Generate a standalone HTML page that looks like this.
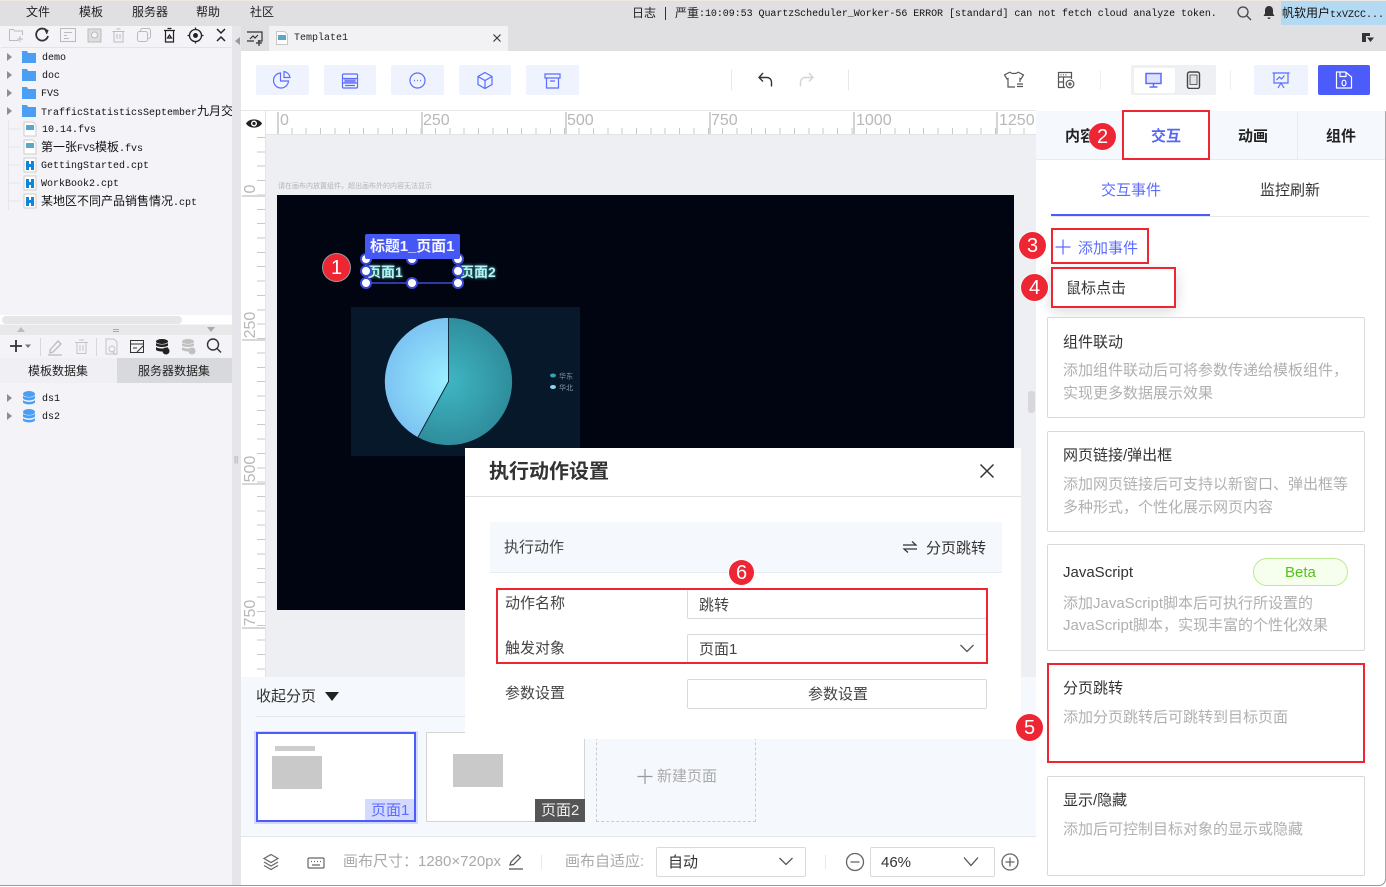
<!DOCTYPE html>
<html lang="zh-CN">
<head>
<meta charset="utf-8">
<title>执行动作设置</title>
<style>
html,body{margin:0;padding:0;background:#fff}
#r{position:relative;width:1386px;height:887px;overflow:hidden;background:#fff;font-family:"Liberation Sans","Noto Sans CJK SC",sans-serif;color:#333}
#r div,#r span,#r svg{position:absolute}
.t{white-space:nowrap;line-height:1}
.m{font-size:12px;color:#222}
.f{font-family:"Liberation Mono","Noto Sans CJK SC",monospace;font-size:10px;color:#111;white-space:nowrap;line-height:18px;height:18px}
.f b{font-family:"Noto Sans CJK SC",sans-serif;font-size:12px;font-weight:400}
.tb{top:65px;height:30px;background:#eff3fe;border-radius:2px}
.card{left:1047px;width:316px;border:1px solid #d9d9d9;border-radius:2px;background:#fff}
.ct{left:1063px;font-size:15px;color:#333;margin-top:1px}
.cd{left:1063px;font-size:15px;color:#b0b0b0;margin-top:1px}
.rb{border:2px solid #ee2532;box-sizing:border-box}
.c{width:27px;height:27px;border-radius:50%;background:#ee2532;color:#fff;font-size:20px;line-height:29px;text-align:center;box-shadow:0 0 0 1px rgba(255,255,255,.6)}
.h{width:8px;height:8px;border-radius:50%;background:#fff;border:2px solid #3a49d8;box-sizing:content-box}
.l{font-size:15px;color:#444;margin-top:1px}
.in{background:#fff;border:1px solid #d9d9d9;border-radius:2px;box-sizing:border-box}
.rt{color:#b8b8b8;font-size:16px;line-height:1;white-space:nowrap}
</style>
</head>
<body>
<div id="r">
<!-- top bars -->
<div style="left:0;top:0;width:1386px;height:51px;background:#e0e0e2"></div>
<div style="left:0;top:0;width:1386px;height:1px;background:#efe9e2"></div>
<span class="t m" style="left:26px;top:6px">文件</span>
<span class="t m" style="left:79px;top:6px">模板</span>
<span class="t m" style="left:132px;top:6px">服务器</span>
<span class="t m" style="left:196px;top:6px">帮助</span>
<span class="t m" style="left:250px;top:6px">社区</span>
<span class="t m" style="left:632px;top:7px">日志</span>
<div style="left:665px;top:7px;width:1px;height:13px;background:#333"></div>
<span class="t m" style="left:675px;top:7px">严重</span>
<span class="t" style="left:699px;top:9px;font:10px 'Liberation Mono',monospace;letter-spacing:-.05px;color:#111">:10:09:53 QuartzScheduler_Worker-56 ERROR [standard] can not fetch cloud analyze token.</span>
<svg style="left:1236px;top:5px" width="16" height="16" viewBox="0 0 16 16" fill="none" stroke="#444" stroke-width="1.300"><circle cx="7" cy="7" r="5"/><path d="M11 11l4 4"/></svg>
<svg style="left:1262px;top:5px" width="14" height="15" viewBox="0 0 14 15" fill="#333"><path d="M7 1c-2.500 0-4 2-4 4.500v3L1.500 11h11L11 8.500v-3C11 3 9.500 1 7 1zM5.500 12.500a1.500 1.500 0 0 0 3 0z"/></svg>
<div style="left:1281px;top:1px;width:105px;height:24px;background:#b3daf2"></div>
<span class="t" style="left:1282px;top:7px;font-size:12px;color:#111">帆软用户<span style="position:static;font:10px 'Liberation Mono',monospace">txVZCC...</span></span>
<svg style="left:1361px;top:32px" width="14" height="12" viewBox="0 0 14 12" fill="#333"><path d="M1 1h8v3H5v6H1zM6 5.500h7L9.500 10z"/></svg>

<!-- left panel -->
<div style="left:0;top:26px;width:232px;height:861px;background:#f4f4f8"></div>
<div style="left:232px;top:26px;width:9px;height:861px;background:#e6e6ea"></div>
<div style="left:1px;top:47px;width:231px;height:1px;background:#e4e4e8"></div>
<svg style="left:0;top:26px" width="232" height="22" viewBox="0 0 232 22" fill="none" stroke="#bbb" stroke-width="1">
<path d="M9.500 3.500h4l1 1.500h8v4M9.500 3.500v11h9M20 10v6M17 13h6"/>
<path d="M47 5a6 6 0 1 0 1 5" stroke="#333" stroke-width="1.800"/><path d="M44 3l4 1.500-1.500 3.500" fill="#333" stroke="#333"/>
<rect x="60.500" y="2.500" width="15" height="13"/><path d="M64 6.500h8M64 9.500h3M64 12.500h5"/>
<rect x="88" y="3" width="13" height="13" fill="#ddd"/><circle cx="94.500" cy="9" r="3" fill="#f4f4f8"/>
<path d="M112.500 5.500h12M114 5.500v10.500h9V5.500M116.500 3h4"/><path d="M117 8v5M120 8v5"/>
<rect x="140.500" y="2.500" width="10" height="10" rx="2"/><rect x="137.500" y="5.500" width="10" height="10" rx="2" fill="#f4f4f8"/>
<g stroke="#222" stroke-width="1.200"><path d="M164 4.500h11M165.500 4.500v11.500h8V4.500M167.500 2.500h4"/><path d="M167.500 12l2-3 2 3z"/></g>
<g stroke="#222" stroke-width="1.300"><circle cx="195.500" cy="9.500" r="6"/><circle cx="195.500" cy="9.500" r="1.800" fill="#222"/><path d="M195.500 1.500v2M195.500 15.500v2M187.500 9.500h2M201.500 9.500h2"/></g>
<g stroke="#222" stroke-width="1.500"><path d="M217 3l4 4 4-4M217 15l4-4 4 4"/></g>
</svg>
<div style="left:235px;top:37px;width:0;height:0;border:4px solid transparent;border-right:5px solid #999;border-left:0"></div>
<!-- tree -->
<svg style="left:0;top:48px" width="40" height="165" viewBox="0 0 40 165">
<g fill="#8e8e8e"><path d="M7 5l5 4-5 4zM7 23l5 4-5 4zM7 41l5 4-5 4zM7 59l5 4-5 4z"/></g>
<path d="M8.500 72v90M8.500 81h12M8.500 99h12M8.500 117h12M8.500 135h12M8.500 153h12" stroke="#e6e6ea" fill="none"/>
<g fill="#4a9ff5"><path d="M22 3h5l1 2h8v10H22zM22 21h5l1 2h8v10H22zM22 39h5l1 2h8v10H22zM22 57h5l1 2h8v10H22z"/></g>
<g>
<path d="M24 74h9l3 3v11H24z" fill="#fff" stroke="#ccc"/><rect x="26" y="77" width="8" height="5" fill="#5aa7c8"/>
<path d="M24 92h9l3 3v11H24z" fill="#fff" stroke="#ccc"/><rect x="26" y="95" width="8" height="5" fill="#5aa7c8"/>
<path d="M24 110h12v14H24z" fill="#fff" stroke="#ccc"/><path d="M26 113h3v3h2v-3h3v9h-3v-3h-2v3h-3z" fill="#0f86d8"/>
<path d="M24 128h12v14H24z" fill="#fff" stroke="#ccc"/><path d="M26 131h3v3h2v-3h3v9h-3v-3h-2v3h-3z" fill="#0f86d8"/>
<path d="M24 146h12v14H24z" fill="#fff" stroke="#ccc"/><path d="M26 149h3v3h2v-3h3v9h-3v-3h-2v3h-3z" fill="#0f86d8"/>
</g>
</svg>
<span class="f" style="left:42px;top:50px">demo</span>
<span class="f" style="left:42px;top:68px">doc</span>
<span class="f" style="left:41px;top:86px">FVS</span>
<span class="f" style="left:41px;top:102px;width:191px;overflow:hidden">TrafficStatisticsSeptember<b>九月交</b></span>
<span class="f" style="left:42px;top:122px">10.14.fvs</span>
<span class="f" style="left:41px;top:138px"><b>第一张</b>FVS<b>模板</b>.fvs</span>
<span class="f" style="left:41px;top:158px">GettingStarted.cpt</span>
<span class="f" style="left:41px;top:176px">WorkBook2.cpt</span>
<span class="f" style="left:41px;top:192px"><b>某地区不同产品销售情况</b>.cpt</span>
<div style="left:0;top:315px;width:232px;height:9px;background:#fff"></div>
<div style="left:2px;top:316px;width:180px;height:8px;background:#e6e6e6;border-radius:4px"></div>
<div style="left:0;top:325px;width:232px;height:10px;background:#e8e8ea"></div>
<div style="left:17px;top:327px;width:0;height:0;border:4px solid transparent;border-bottom:5px solid #bbb;border-top:0"></div>
<div style="left:207px;top:327px;width:0;height:0;border:4px solid transparent;border-top:5px solid #aaa;border-bottom:0"></div>
<div style="left:113px;top:329px;width:6px;height:1px;background:#aaa"></div>
<div style="left:113px;top:331px;width:6px;height:1px;background:#aaa"></div>
<svg style="left:0;top:335px" width="232" height="23" viewBox="0 0 232 23" fill="none">
<path d="M16 5v12M10 11h12" stroke="#333" stroke-width="1.800"/><path d="M25 9.500h6l-3 3.500z" fill="#777"/>
<path d="M40.500 3v18M96.500 3v18" stroke="#d8d8da"/>
<path d="M50 15l8-9 3 3-8 8-3 1zM48 20h14" stroke="#bbb" stroke-width="1.300"/>
<path d="M75 7.500h13M77 7.500v11h9v-11M79 5h5M80 10v6M83 10v6" stroke="#c4c4c4"/>
<path d="M106 4h8l3 3v12h-11zM112 16l4 4" stroke="#c4c4c4"/><circle cx="112" cy="14" r="3" stroke="#c4c4c4"/>
<rect x="130.500" y="5.500" width="13" height="12" stroke="#333"/><path d="M130.500 9h13M133 13h4M137 17l6-6" stroke="#333"/>
<g fill="#222"><ellipse cx="162" cy="6.500" rx="6" ry="2.500"/><path d="M156 8c2 2 10 2 12 0v2.500c-2 2-10 2-12 0zM156 12c2 2 10 2 12 0v3c-2 2-10 2-12 0z"/><circle cx="166" cy="16" r="3.500"/></g>
<g fill="#c0c0c0"><ellipse cx="188" cy="6.500" rx="6" ry="2.500"/><path d="M182 8c2 2 10 2 12 0v2.500c-2 2-10 2-12 0zM182 12c2 2 10 2 12 0v3c-2 2-10 2-12 0z"/><circle cx="192" cy="16" r="3.500"/></g>
<circle cx="213" cy="9.500" r="5.500" stroke="#333" stroke-width="1.400"/><path d="M217 13.500l4 4" stroke="#333" stroke-width="1.400"/>
</svg>
<div style="left:0;top:358px;width:117px;height:25px;background:#f0f0f4"></div>
<div style="left:117px;top:358px;width:115px;height:25px;background:#d8d9dd"></div>
<span class="t m" style="left:28px;top:365px">模板数据集</span>
<span class="t m" style="left:138px;top:365px">服务器数据集</span>
<svg style="left:0;top:388px" width="40" height="40" viewBox="0 0 40 40">
<path d="M7 6l5 4-5 4zM7 24l5 4-5 4z" fill="#8e8e8e"/>
<g fill="#4a9ff5"><ellipse cx="29" cy="6" rx="6" ry="3"/><path d="M23 7.500c2 2.500 10 2.500 12 0v3c-2 2.500-10 2.500-12 0zM23 12c2 2.500 10 2.500 12 0v2.500c-2 2.500-10 2.500-12 0z"/><ellipse cx="29" cy="24" rx="6" ry="3"/><path d="M23 25.500c2 2.500 10 2.500 12 0v3c-2 2.500-10 2.500-12 0zM23 30c2 2.500 10 2.500 12 0v2.500c-2 2.500-10 2.500-12 0z"/></g>
</svg>
<span class="f" style="left:42px;top:391px">ds1</span>
<span class="f" style="left:42px;top:409px">ds2</span>
<span class="t" style="left:234px;top:456px;font-size:8px;color:#999">||</span>

<!-- tab bar -->
<svg style="left:246px;top:30px" width="18" height="17" viewBox="0 0 18 17" fill="none" stroke="#333" stroke-width="1.200"><path d="M1 2h15v9h-4M8 11H1zM4 9l3-3 2 2 3-3"/><path d="M13 10v6M10 13h6"/></svg>
<div style="left:269px;top:26px;width:239px;height:25px;background:#f2f2f5"></div>
<svg style="left:276px;top:31px" width="12" height="14" viewBox="0 0 12 14"><path d="M.5.500h8l3 3v10H.5z" fill="#fff" stroke="#c8c8c8"/><rect x="2" y="4" width="8" height="5" fill="#5aa7c8"/></svg>
<span class="t" style="left:294px;top:33px;font:10px 'Liberation Mono',monospace;color:#222">Template1</span>
<svg style="left:492px;top:33px" width="10" height="10" viewBox="0 0 10 10" stroke="#333" stroke-width="1.100"><path d="M1.500 1.500l7 7M8.500 1.500l-7 7"/></svg>

<!-- toolbar -->
<div style="left:241px;top:51px;width:1145px;height:59px;background:#fff"></div>
<div style="left:241px;top:110px;width:1145px;height:1px;background:#e6e6ea"></div>
<div class="tb" style="left:256px;width:53px"></div>
<div class="tb" style="left:324px;width:52px"></div>
<div class="tb" style="left:391px;width:53px"></div>
<div class="tb" style="left:459px;width:52px"></div>
<div class="tb" style="left:526px;width:53px"></div>
<svg style="left:241px;top:51px" width="350" height="59" viewBox="0 0 350 59" fill="none" stroke="#5b6cff" stroke-width="1.200">
<path d="M39.500 22a7.500 7.500 0 1 0 8 8h-8zM43 20.500a7 7 0 0 1 6 6h-6z"/>
<rect x="101.500" y="23" width="15" height="14" rx="1"/><path d="M101.500 27.500h15M101.500 32h15M104 30h10M104 34.500h10"/><rect x="103" y="28" width="12" height="3.500" fill="#5b6cff" stroke="none" opacity=".5"/>
<circle cx="176.500" cy="29.500" r="7.500"/><path d="M173 29.500h1M176 29.500h1M179 29.500h1"/>
<path d="M244 21.500l7 4v8l-7 4-7-4v-8zM237 25.500l7 4 7-4M244 29.500v8"/>
<path d="M304 23h15v4h-15zM305.500 27v10h12V27M309 30h5"/>
</svg>
<div style="left:731px;top:70px;width:1px;height:20px;background:#e8e8e8"></div>
<div style="left:848px;top:70px;width:1px;height:20px;background:#e8e8e8"></div>
<svg style="left:756px;top:71px" width="60" height="18" viewBox="0 0 60 18" fill="none" stroke-width="1.400"><path d="M7 2L3 6.500l4 4M3 6.500h8a4.500 4.500 0 0 1 4.500 4.500v4.500" stroke="#333"/><path d="M53 2l4 4.500-4 4M57 6.500h-8a4.500 4.500 0 0 0-4.500 4.500v4.500" stroke="#d4d4d4"/></svg>
<svg style="left:1003px;top:71px" width="22" height="18" viewBox="0 0 22 18" fill="none" stroke="#555" stroke-width="1.200"><path d="M7 1L1.500 4 4 8l1-.5V16h7M15 1l5.500 3L18 8l-1-.5V11M7 1c1 2 7 2 8 0M14 13h6M14 15.500h6"/></svg>
<svg style="left:1057px;top:71px" width="18" height="18" viewBox="0 0 18 18" fill="none" stroke="#555" stroke-width="1.200"><path d="M8 16.500H1.500v-15h13V8M1.500 6h13M6.500 6v10.500M1.500 11h5"/><path d="M3.500 3.800h1M6 3.800h1M8.500 3.800h1"/><circle cx="13" cy="13" r="3.800"/><circle cx="13" cy="13" r="1"/></svg>
<div style="left:1131px;top:65px;width:85px;height:30px;background:#eff0f4;border-radius:2px"></div>
<div style="left:1134px;top:68px;width:41px;height:25px;background:#fff;border-radius:2px"></div>
<svg style="left:1144px;top:71px" width="20" height="18" viewBox="0 0 20 18" fill="none" stroke="#5b6cff" stroke-width="1.500"><rect x="2" y="2.500" width="15" height="10" fill="#dfe2ff"/><path d="M9.500 12.500v3M5.500 16h8"/></svg>
<svg style="left:1186px;top:71px" width="15" height="18" viewBox="0 0 15 18" fill="none" stroke="#444" stroke-width="1.400"><rect x="1.500" y="1" width="12" height="16.500" rx="2"/><rect x="4" y="4" width="7" height="9.500" fill="#e4e4e8" stroke="#444" stroke-width=".8"/></svg>
<div style="left:1100px;top:70px;width:1px;height:20px;background:#eee"></div>
<div style="left:1230px;top:70px;width:1px;height:20px;background:#eee"></div>
<div style="left:1254px;top:65px;width:54px;height:30px;background:#eff3fe;border-radius:2px"></div>
<svg style="left:1272px;top:71px" width="18" height="18" viewBox="0 0 18 18" fill="none" stroke="#5b6cff" stroke-width="1.200"><path d="M.5 2h17M2 2v10h14V2M4.500 9l3-3 2 2 3-3.500M6 17l3-5 3 5"/></svg>
<div style="left:1318px;top:65px;width:52px;height:30px;background:#4b5cfb;border-radius:2px"></div>
<svg style="left:1335px;top:71px" width="18" height="18" viewBox="0 0 18 18" fill="none" stroke="#fff" stroke-width="1.200"><path d="M1.500 1h9l6 5v11h-15zM5 1v4.500h6V1"/><ellipse cx="9" cy="12" rx="2" ry="2.800"/></svg>

<!-- canvas -->
<div style="left:241px;top:111px;width:795px;height:566px;background:#eeeff3"></div>
<div style="left:241px;top:111px;width:795px;height:24px;background:#fff;border-bottom:1px solid #e4e4e8;box-sizing:border-box"></div>
<div style="left:241px;top:135px;width:25px;height:542px;background:#fff;border-right:1px solid #e4e4e8;box-sizing:border-box"></div>
<div style="left:241px;top:111px;width:25px;height:24px;background:#fff;border-right:1px solid #e4e4e8;box-sizing:border-box"></div>
<svg style="left:245px;top:117px" width="18" height="13" viewBox="0 0 18 13"><path d="M1 6.500C4 1 14 1 17 6.500 14 12 4 12 1 6.500z" fill="#222"/><circle cx="9" cy="6.500" r="3" fill="#fff"/><circle cx="9" cy="6.500" r="1.600" fill="#222"/></svg>
<div style="left:277px;top:128px;width:759px;height:6px;background:repeating-linear-gradient(90deg,#c8c8c8 0,#c8c8c8 1px,transparent 1px,transparent 14.360px)"></div>
<div style="left:277px;top:112px;width:2px;height:22px;background:#d4d4d4"></div>
<div style="left:421px;top:112px;width:2px;height:22px;background:#d4d4d4"></div>
<div style="left:565px;top:112px;width:2px;height:22px;background:#d4d4d4"></div>
<div style="left:709px;top:112px;width:2px;height:22px;background:#d4d4d4"></div>
<div style="left:853px;top:112px;width:2px;height:22px;background:#d4d4d4"></div>
<div style="left:996px;top:112px;width:2px;height:22px;background:#d4d4d4"></div>
<span class="rt" style="left:280px;top:113px">0</span>
<span class="rt" style="left:423px;top:113px">250</span>
<span class="rt" style="left:567px;top:113px">500</span>
<span class="rt" style="left:711px;top:113px">750</span>
<span class="rt" style="left:856px;top:113px">1000</span>
<span class="rt" style="left:999px;top:113px">1250</span>
<div style="left:257px;top:137px;width:8px;height:539px;background:repeating-linear-gradient(180deg,#c8c8c8 0,#c8c8c8 1px,transparent 1px,transparent 14.360px)"></div>
<div style="left:242px;top:195px;width:23px;height:2px;background:#d8d8d8"></div>
<div style="left:242px;top:339px;width:23px;height:2px;background:#d8d8d8"></div>
<div style="left:242px;top:483px;width:23px;height:2px;background:#d8d8d8"></div>
<div style="left:242px;top:627px;width:23px;height:2px;background:#d8d8d8"></div>
<span class="rt" style="left:237px;top:181px;width:28px;transform:rotate(-90deg);transform-origin:center;text-align:center">0</span>
<span class="rt" style="left:237px;top:317px;width:28px;transform:rotate(-90deg);transform-origin:center;text-align:center">250</span>
<span class="rt" style="left:237px;top:461px;width:28px;transform:rotate(-90deg);transform-origin:center;text-align:center">500</span>
<span class="rt" style="left:237px;top:605px;width:28px;transform:rotate(-90deg);transform-origin:center;text-align:center">750</span>
<span class="t" style="left:278px;top:183px;font-size:7px;color:#b4b4b4">请在画布内放置组件，超出画布外的内容无法显示</span>
<div style="left:277px;top:195px;width:737px;height:415px;background:#000511"></div>
<div style="left:1028px;top:391px;width:7px;height:22px;background:#d8d8dc;border-radius:3px"></div>

<!-- pie -->
<div style="left:351px;top:307px;width:229px;height:149px;background:#07182a"></div>
<svg style="left:351px;top:307px" width="229" height="149" viewBox="0 0 229 149">
<defs>
<radialGradient id="a" gradientUnits="userSpaceOnUse" cx="97.500" cy="74.500" r="64"><stop offset="0" stop-color="#3fb6c3"/><stop offset="1" stop-color="#2f8d9c"/></radialGradient>
<radialGradient id="b" gradientUnits="userSpaceOnUse" cx="97.500" cy="74.500" r="64"><stop offset="0" stop-color="#9af0ff"/><stop offset="1" stop-color="#7cc3f2"/></radialGradient>
</defs>
<path d="M97.500 74.500V10.500A64 64 0 1 1 66.700 130.600z" fill="url(#a)" stroke="#07182a" stroke-width=".8"/>
<path d="M97.500 74.500L66.700 130.600A64 64 0 0 1 97.500 10.500z" fill="url(#b)" stroke="#07182a" stroke-width=".8"/>
<ellipse cx="202" cy="68.500" rx="3" ry="2" fill="#36a3ae"/><ellipse cx="202" cy="80" rx="3" ry="2" fill="#87d5f8"/>
<text x="208" y="71.500" font-size="7" fill="#8a97a4" font-family="Noto Sans CJK SC">华东</text>
<text x="208" y="83" font-size="7" fill="#8a97a4" font-family="Noto Sans CJK SC">华北</text>
</svg>

<!-- selected title -->
<span class="t" style="left:367px;top:265px;font-size:14px;font-weight:700;color:#bdeff2;text-shadow:0 0 3px #4cc">页面1</span>
<span class="t" style="left:460px;top:265px;font-size:14px;font-weight:700;color:#bdeff2;text-shadow:0 0 3px #4cc">页面2</span>
<div style="left:366px;top:282px;width:92px;height:2px;background:#2d3aa8"></div>
<div class="h" style="left:360px;top:253px"></div>
<div class="h" style="left:406px;top:253px"></div>
<div class="h" style="left:452px;top:253px"></div>
<div class="h" style="left:360px;top:265px"></div>
<div class="h" style="left:452px;top:265px"></div>
<div class="h" style="left:360px;top:277px"></div>
<div class="h" style="left:406px;top:277px"></div>
<div class="h" style="left:452px;top:277px"></div>
<div style="left:365px;top:234px;width:95px;height:25px;background:#4558f5;border-radius:2px"></div>
<span class="t" style="left:370px;top:239px;font-size:15px;font-weight:700;letter-spacing:-.1px;color:#f4f5ff">标题1_页面1</span>

<!-- pages band -->
<div style="left:241px;top:677px;width:795px;height:160px;background:#f5f8fc"></div>
<span class="t" style="left:256px;top:689px;font-size:15px;color:#333">收起分页</span>
<div style="left:325px;top:692px;width:0;height:0;border:7px solid transparent;border-top:9px solid #222;border-bottom:0"></div>
<div style="left:256px;top:716px;width:780px;height:1px;background:#e4e6ea"></div>
<div style="left:254px;top:731px;width:164px;height:93px;background:#d3d9ff"></div>
<div style="left:256px;top:732px;width:160px;height:90px;background:#fff;border:2px solid #4b5cfb;box-sizing:border-box"></div>
<div style="left:275px;top:746px;width:40px;height:5px;background:#cdcdcd"></div>
<div style="left:272px;top:756px;width:50px;height:33px;background:#c9c9c9"></div>
<div style="left:365px;top:799px;width:49px;height:21px;background:#d3d9ff"></div>
<span class="t" style="left:371px;top:803px;font-size:15px;color:#5b6cff">页面1</span>
<div style="left:426px;top:732px;width:159px;height:90px;background:#fff;border:1px solid #d4d4d4;box-sizing:border-box"></div>
<div style="left:453px;top:754px;width:50px;height:33px;background:#c9c9c9"></div>
<div style="left:535px;top:799px;width:50px;height:23px;background:#555"></div>
<span class="t" style="left:541px;top:803px;font-size:15px;color:#eee">页面2</span>
<div style="left:596px;top:732px;width:160px;height:90px;border:1px dashed #ccc;box-sizing:border-box"></div>
<svg style="left:637px;top:769px" width="16" height="16" viewBox="0 0 16 16" stroke="#999" stroke-width="1.200"><path d="M8 0v15M.5 7.500h15"/></svg>
<span class="t" style="left:657px;top:769px;font-size:15px;color:#aaa">新建页面</span>

<!-- footer -->
<div style="left:241px;top:836px;width:795px;height:51px;background:#fff;border-top:1px solid #e4e6ea;box-sizing:border-box"></div>
<svg style="left:262px;top:853px" width="18" height="18" viewBox="0 0 18 18" fill="none" stroke="#666" stroke-width="1.200"><path d="M9 1.500l7 4-7 4-7-4zM2 9l7 4 7-4M2 12.500l7 4 7-4"/></svg>
<svg style="left:306px;top:856px" width="20" height="14" viewBox="0 0 20 14" fill="none" stroke="#666" stroke-width="1.200"><rect x="2" y="2" width="16" height="10" rx="1"/><path d="M5 5.500h1M8 5.500h1M11 5.500h1M14 5.500h1M6 9h8"/></svg>
<span class="t" style="left:343px;top:854px;font-size:15px;color:#aaa">画布尺寸：1280×720px</span>
<svg style="left:507px;top:853px" width="18" height="17" viewBox="0 0 18 17" fill="none" stroke="#555" stroke-width="1.200"><path d="M3 12l1-3 7-7 2.500 2.500-7 7zM2 16h14"/></svg>
<div style="left:541px;top:855px;width:1px;height:14px;background:#e8e8e8"></div>
<span class="t" style="left:565px;top:854px;font-size:15px;color:#aaa">画布自适应:</span>
<div class="in" style="left:656px;top:847px;width:150px;height:30px"></div>
<span class="t" style="left:668px;top:855px;font-size:15px;color:#333">自动</span>
<svg style="left:778px;top:856px" width="16" height="11" viewBox="0 0 16 11" fill="none" stroke="#555" stroke-width="1.300"><path d="M1.500 2l6.500 6.500L14.500 2"/></svg>
<div style="left:825px;top:855px;width:1px;height:14px;background:#e8e8e8"></div>
<svg style="left:845px;top:852px" width="20" height="20" viewBox="0 0 20 20" fill="none" stroke="#666" stroke-width="1.300"><circle cx="10" cy="10" r="8.500"/><path d="M5.500 10h9"/></svg>
<div class="in" style="left:870px;top:847px;width:125px;height:30px"></div>
<span class="t" style="left:881px;top:855px;font-size:15px;color:#333">46%</span>
<svg style="left:963px;top:856px" width="16" height="12" viewBox="0 0 16 12" fill="none" stroke="#555" stroke-width="1.300"><path d="M1 1.500l7 8 7-8"/></svg>
<svg style="left:1001px;top:853px" width="18" height="18" viewBox="0 0 18 18" fill="none" stroke="#666" stroke-width="1.300"><circle cx="9" cy="9" r="8"/><path d="M4.500 9h9M9 4.500v9"/></svg>
<div style="left:1036px;top:110px;width:350px;height:777px;background:#fff"></div>

<!-- right panel -->
<div style="left:1036px;top:111px;width:350px;height:49px;background:#f5f8fc;border-bottom:1px solid #e8ebf0;box-sizing:border-box"></div>
<div style="left:1297px;top:111px;width:1px;height:48px;background:#e8ebf0"></div>
<div style="left:1122px;top:110px;width:88px;height:50px;background:#fff"></div>
<span class="t" style="left:1065px;top:129px;font-size:15px;font-weight:700;color:#222">内容</span>
<span class="t" style="left:1151px;top:129px;font-size:15px;font-weight:700;color:#5565f7">交互</span>
<span class="t" style="left:1238px;top:129px;font-size:15px;font-weight:700;color:#222">动画</span>
<span class="t" style="left:1326px;top:129px;font-size:15px;font-weight:700;color:#222">组件</span>
<span class="t" style="left:1101px;top:183px;font-size:15px;color:#5b6cff">交互事件</span>
<span class="t" style="left:1260px;top:183px;font-size:15px;color:#333">监控刷新</span>
<div style="left:1051px;top:216px;width:318px;height:1px;background:#e8e8ec"></div>
<div style="left:1051px;top:214px;width:159px;height:2px;background:#4b5cfb"></div>
<svg style="left:1055px;top:239px" width="16" height="16" viewBox="0 0 16 16" stroke="#5b6cff" stroke-width="1.200"><path d="M8 .5v15M.5 8h15"/></svg>
<span class="t" style="left:1078px;top:241px;font-size:15px;color:#5b6cff">添加事件</span>
<div style="left:1051px;top:267px;width:125px;height:40px;background:#fff;box-shadow:0 4px 14px rgba(0,0,0,.16)"></div>
<span class="t" style="left:1066px;top:281px;font-size:15px;color:#333">鼠标点击</span>

<div class="card" style="top:317px;height:99px"></div>
<span class="t ct" style="top:334px">组件联动</span>
<span class="t cd" style="top:362px">添加组件联动后可将参数传递给模板组件，</span>
<span class="t cd" style="top:385px">实现更多数据展示效果</span>

<div class="card" style="top:431px;height:99px"></div>
<span class="t ct" style="top:447px">网页链接/弹出框</span>
<span class="t cd" style="top:476px">添加网页链接后可支持以新窗口、弹出框等</span>
<span class="t cd" style="top:499px">多种形式，个性化展示网页内容</span>

<div class="card" style="top:544px;height:105px"></div>
<span class="t ct" style="top:564px">JavaScript</span>
<div style="left:1253px;top:558px;width:93px;height:26px;border:1px solid #b7eb8f;border-radius:14px;background:#f6ffed"></div>
<span class="t" style="left:1285px;top:565px;font-size:15px;color:#52c41a">Beta</span>
<span class="t cd" style="top:595px">添加JavaScript脚本后可执行所设置的</span>
<span class="t cd" style="top:617px">JavaScript脚本，实现丰富的个性化效果</span>

<span class="t ct" style="top:680px">分页跳转</span>
<span class="t cd" style="top:709px">添加分页跳转后可跳转到目标页面</span>

<div class="card" style="top:776px;height:98px"></div>
<span class="t ct" style="top:792px">显示/隐藏</span>
<span class="t cd" style="top:821px">添加后可控制目标对象的显示或隐藏</span>

<!-- window edge -->
<div style="left:1376px;top:877px;width:9px;height:8px;border-right:1px solid #999;border-bottom:1px solid #999;border-bottom-right-radius:7px;background:#fff"></div>
<div style="left:1385px;top:111px;width:1px;height:768px;background:#aaa"></div>
<div style="left:0;top:885px;width:1378px;height:1px;background:#9a9a9a"></div>
<div style="left:0;top:886px;width:1386px;height:1px;background:#fff"></div>

<!-- dialog -->
<div style="left:465px;top:448px;width:556px;height:291px;background:#fff"></div>
<span class="t" style="left:489px;top:462px;font-size:20px;font-weight:700;color:#333">执行动作设置</span>
<svg style="left:978px;top:462px" width="18" height="18" viewBox="0 0 18 18" stroke="#333" stroke-width="1.500"><path d="M2.500 2.500l13 13M15.500 2.500l-13 13"/></svg>
<div style="left:465px;top:496px;width:556px;height:1px;background:#e0e0e0"></div>
<div style="left:490px;top:522px;width:512px;height:51px;background:#f5f8fc;border-bottom:1px solid #e8ebf0;box-sizing:border-box"></div>
<span class="t l" style="left:504px;top:539px">执行动作</span>
<svg style="left:902px;top:540px" width="16" height="14" viewBox="0 0 16 14" fill="none" stroke="#333" stroke-width="1.200"><path d="M1 5h13l-4-3.500M15 9H2l4 3.500"/></svg>
<span class="t l" style="left:926px;top:540px;color:#333">分页跳转</span>
<span class="t l" style="left:505px;top:595px">动作名称</span>
<div class="in" style="left:687px;top:590px;width:300px;height:29px;border-top:0"></div>
<span class="t l" style="left:699px;top:597px;color:#444">跳转</span>
<span class="t l" style="left:505px;top:640px">触发对象</span>
<div class="in" style="left:687px;top:634px;width:300px;height:30px"></div>
<span class="t l" style="left:699px;top:641px;color:#444">页面1</span>
<svg style="left:959px;top:643px" width="16" height="11" viewBox="0 0 16 11" fill="none" stroke="#555" stroke-width="1.300"><path d="M1.500 2l6.500 6.500L14.500 2"/></svg>
<span class="t l" style="left:505px;top:685px">参数设置</span>
<div class="in" style="left:687px;top:679px;width:300px;height:30px"></div>
<span class="t l" style="left:808px;top:686px">参数设置</span>

<!-- annotation boxes -->
<div class="rb" style="left:1122px;top:110px;width:88px;height:50px"></div>
<div class="rb" style="left:1051px;top:228px;width:98px;height:36px"></div>
<div class="rb" style="left:1051px;top:267px;width:125px;height:41px"></div>
<div class="rb" style="left:1047px;top:663px;width:318px;height:100px"></div>
<div class="rb" style="left:496px;top:588px;width:492px;height:76px"></div>
<div class="c" style="left:323px;top:254px">1</div>
<div class="c" style="left:1089px;top:123px">2</div>
<div class="c" style="left:1019px;top:232px">3</div>
<div class="c" style="left:1021px;top:274px">4</div>
<div class="c" style="left:1016px;top:714px">5</div>
<div class="c" style="left:729px;top:560px;width:25px;height:25px;line-height:27px">6</div>
</div>
</body>
</html>
